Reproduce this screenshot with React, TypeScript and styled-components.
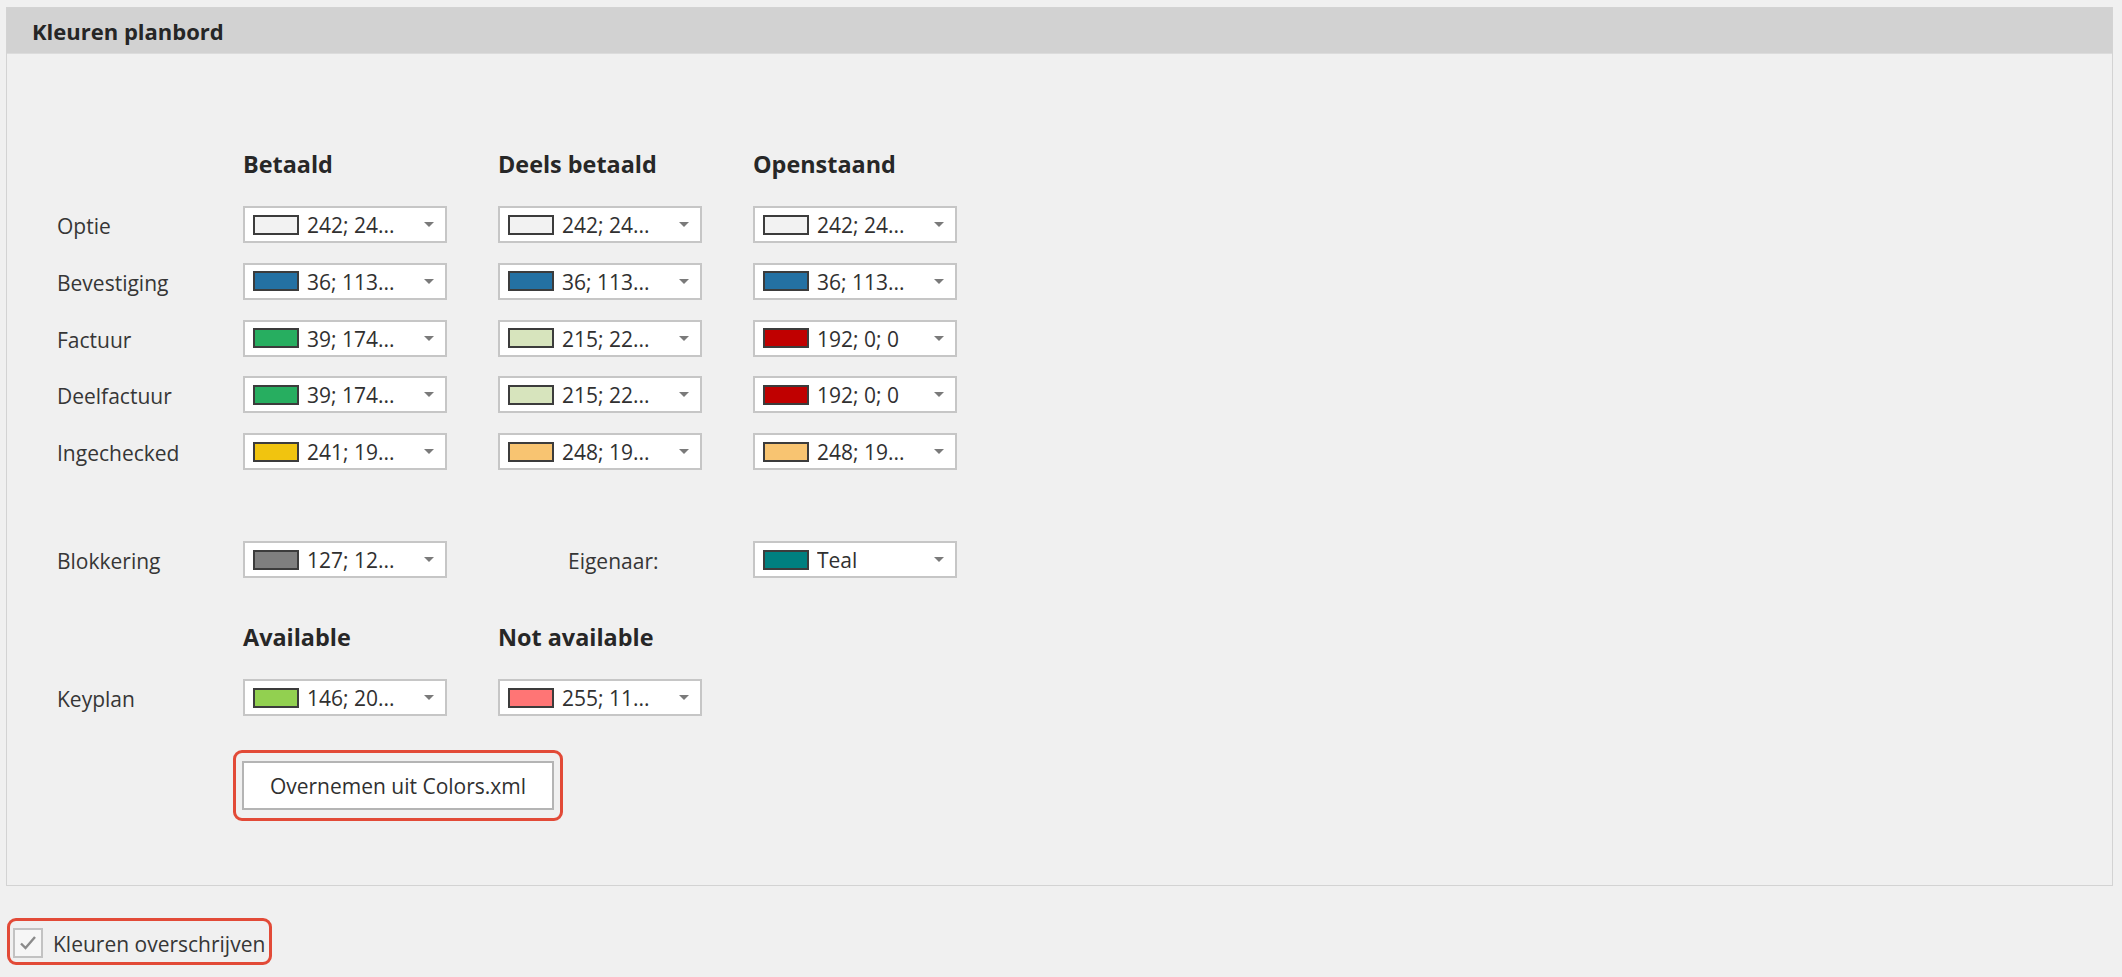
import React from "react";
import styled, { createGlobalStyle } from "styled-components";

const Global = createGlobalStyle`
  html, body { margin: 0; padding: 0; background: #f0f0f0; }
  body { font-family: "Open Sans", "Noto Sans", sans-serif; color: #333; }
  * { box-sizing: border-box; }
`;

const Page = styled.div`
  width: 2122px;
  height: 977px;
  padding: 7px 9px 0 6px;
  display: flex;
  flex-direction: column;
  align-items: stretch;
`;

const Panel = styled.section`
  border: 1px solid #d3d3d3;
  background: #f0f0f0;
`;

const PanelHeader = styled.header`
  height: 46px;
  background: #d2d2d2;
  border-bottom: 1px solid #dcdcdc;
  display: flex;
  align-items: center;
  padding-left: 25px;
  font-size: 22px;
  font-weight: 700;
  color: #262626;
`;

const PanelBody = styled.div`
  padding: 94px 0 64px 50px;
  display: flex;
  flex-direction: column;
  align-items: flex-start;
`;

const Row = styled.div<{ $top?: number }>`
  display: grid;
  grid-template-columns: 135px repeat(3, 204px);
  column-gap: 51px;
  align-items: center;
  margin-top: ${(p) => p.$top ?? 0}px;
`;

const ColHead = styled.div`
  font-size: 23.4px;
  font-weight: 700;
  line-height: 32px;
  color: #272727;
  white-space: nowrap;
`;

const Label = styled.div<{ $indent?: number }>`
  font-size: 21px;
  line-height: 28px;
  padding-top: 3px;
  color: #363636;
  white-space: nowrap;
  margin-left: ${(p) => p.$indent ?? 0}px;
`;

const Combo = styled.div`
  height: 37px;
  border: 2px solid #c6c6c6;
  background: #fff;
  display: flex;
  align-items: center;
  padding: 0 11px 0 8px;
`;

const Swatch = styled.span<{ $color: string }>`
  flex: none;
  width: 46px;
  height: 20px;
  border: 2px solid #3c3c3c;
  background: ${(p) => p.$color};
`;

const ComboText = styled.span`
  flex: 1;
  margin-left: 8px;
  padding-top: 1px;
  font-size: 21px;
  line-height: 28px;
  color: #303030;
  white-space: nowrap;
  overflow: hidden;
`;

const Arrow = styled.span`
  flex: none;
  width: 0;
  height: 0;
  border-left: 5px solid transparent;
  border-right: 5px solid transparent;
  border-top: 5px solid #7a7a7a;
`;

const Highlight = styled.div<{ $top: number; $left: number }>`
  margin-top: ${(p) => p.$top}px;
  margin-left: ${(p) => p.$left}px;
  border: 3px solid #e24a37;
  border-radius: 9px;
  display: inline-flex;
  align-items: center;
  align-self: flex-start;
`;

const ButtonBox = styled(Highlight)`
  padding: 8px 6px;
`;

const Button = styled.button`
  width: 312px;
  height: 49px;
  border: 2px solid #b4b4b4;
  background: #fff;
  font-family: inherit;
  font-size: 21px;
  color: #303030;
  padding: 0;
  cursor: pointer;
`;

const CheckBox = styled(Highlight)`
  height: 47px;
  padding: 2px 4px 0 3px;
  gap: 10px;
`;

const Box = styled.span`
  width: 30px;
  height: 30px;
  border: 2px solid #c2c2c2;
  background: #f6f6f6;
  display: flex;
  align-items: center;
  justify-content: center;
`;

type Cell = { color: string; text: string };

const ComboBox = ({ color, text }: Cell) => (
  <Combo>
    <Swatch $color={color} />
    <ComboText>{text}</ComboText>
    <Arrow />
  </Combo>
);

const W: Cell = { color: "#f2f2f2", text: "242; 24..." };
const B: Cell = { color: "#2471a3", text: "36; 113..." };
const G: Cell = { color: "#27ae60", text: "39; 174..." };
const LG: Cell = { color: "#d7e4bd", text: "215; 22..." };
const R: Cell = { color: "#c00000", text: "192; 0; 0" };
const Y: Cell = { color: "#f1c40f", text: "241; 19..." };
const O: Cell = { color: "#f8c471", text: "248; 19..." };

const rows: { label: string; cells: Cell[] }[] = [
  { label: "Optie", cells: [W, W, W] },
  { label: "Bevestiging", cells: [B, B, B] },
  { label: "Factuur", cells: [G, LG, R] },
  { label: "Deelfactuur", cells: [G, LG, R] },
  { label: "Ingechecked", cells: [Y, O, O] },
];

export default function App() {
  return (
    <>
      <Global />
      <Page>
        <Panel>
          <PanelHeader>Kleuren planbord</PanelHeader>
          <PanelBody>
            <Row>
              <span />
              <ColHead>Betaald</ColHead>
              <ColHead>Deels betaald</ColHead>
              <ColHead>Openstaand</ColHead>
            </Row>
            {rows.map((r, i) => (
              <Row key={r.label} $top={i === 0 ? 26 : 19.75}>
                <Label>{r.label}</Label>
                {r.cells.map((c, j) => (
                  <ComboBox key={j} {...c} />
                ))}
              </Row>
            ))}
            <Row $top={71}>
              <Label>Blokkering</Label>
              <ComboBox color="#7f7f7f" text="127; 12..." />
              <Label $indent={70}>Eigenaar:</Label>
              <ComboBox color="#008080" text="Teal" />
            </Row>
            <Row $top={42.5}>
              <span />
              <ColHead>Available</ColHead>
              <ColHead>Not available</ColHead>
            </Row>
            <Row $top={26.5}>
              <Label>Keyplan</Label>
              <ComboBox color="#92d050" text="146; 20..." />
              <ComboBox color="#ff7575" text="255; 11..." />
            </Row>
            <ButtonBox $top={34} $left={176}>
              <Button type="button">Overnemen uit Colors.xml</Button>
            </ButtonBox>
          </PanelBody>
        </Panel>
        <CheckBox $top={32} $left={1}>
          <Box>
            <svg width="22" height="20" viewBox="0 0 22 20">
              <path d="M4 10.5 L8.5 15 L18 4" fill="none" stroke="#8a8a8a" strokeWidth="2.4" />
            </svg>
          </Box>
          <Label>Kleuren overschrijven</Label>
        </CheckBox>
      </Page>
    </>
  );
}
